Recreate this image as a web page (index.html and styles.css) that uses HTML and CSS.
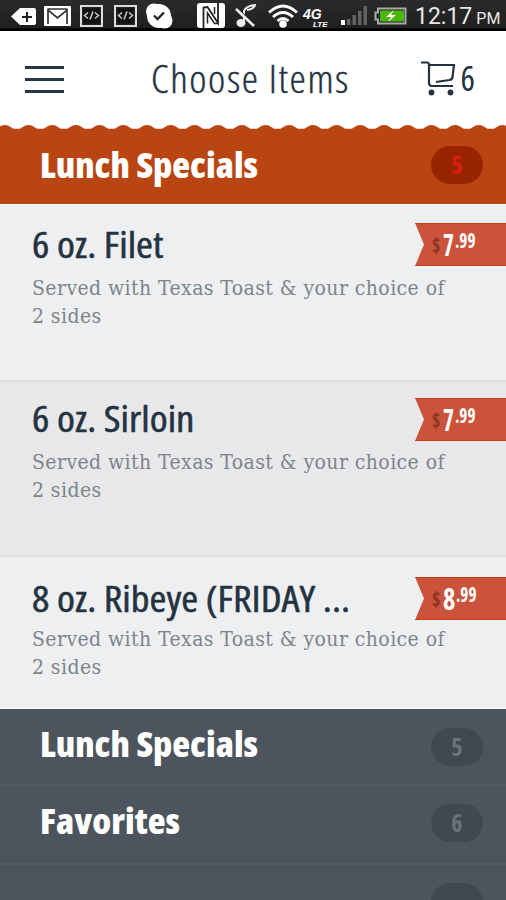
FILE: index.html
```
<!DOCTYPE html>
<html lang="en">
<head>
    <meta charset="UTF-8">
    <meta name="viewport" content="width=device-width, initial-scale=1.0">
    <title>Choose Items</title>
    <link rel="stylesheet" href="styles.css">
</head>
<body>
    <div class="status-bar">
        <svg class="s-back" width="25" height="18" viewBox="0 0 25 18"><path d="M9 1h14q2 0 2 2v13q0 2-2 2H9L0 9.500z" fill="#fff"/><path d="M16 5v10M11 10h10" stroke="#222" stroke-width="2"/></svg>
        <svg class="s-mail" width="27" height="20" viewBox="0 0 27 20"><rect width="27" height="20" rx="1" fill="#fff"/><path d="M4 18V4l9.500 8L23 4v14M4 3h19" fill="none" stroke="#333" stroke-width="1.700"/></svg>
        <svg class="s-code" width="23" height="22" viewBox="0 0 23 22"><rect x="1" y="1" width="21" height="20" fill="#222" stroke="#ddd" stroke-width="2"/><rect x="3.500" y="3.500" width="16" height="15" fill="#111"/><path d="M8 7.500l-3.500 3L8 13.500M15 7.500l3.500 3-3.500 3M13 6.500l-3 8" fill="none" stroke="#ccc" stroke-width="1.500"/></svg>
        <svg class="s-code2" width="23" height="22" viewBox="0 0 23 22"><rect x="1" y="1" width="21" height="20" fill="#222" stroke="#ddd" stroke-width="2"/><rect x="3.500" y="3.500" width="16" height="15" fill="#111"/><path d="M8 7.500l-3.500 3L8 13.500M15 7.500l3.500 3-3.500 3M13 6.500l-3 8" fill="none" stroke="#ccc" stroke-width="1.500"/></svg>
        <svg class="s-check" width="28" height="26" viewBox="0 0 28 26"><circle cx="14" cy="13" r="12" fill="#fff"/><circle cx="9" cy="8.500" r="8" fill="#fff"/><circle cx="19.500" cy="17.500" r="8" fill="#fff"/><path d="M9 12.500l3.500 3.500 6.500-6.500" fill="none" stroke="#222" stroke-width="2.300"/></svg>
        <svg class="s-nfc" width="28" height="25" viewBox="0 0 28 25"><rect width="28" height="25" rx="3" fill="#fff"/><path d="M6.500 25V4.500l4-.5 10.500 16V0" fill="none" stroke="#222" stroke-width="1.800"/><path d="M10.500 20.500V10l7 10.500h3.500M17.500 11V4" fill="none" stroke="#222" stroke-width="1.500"/></svg>
        <svg class="s-mute" width="22" height="24" viewBox="0 0 22 24"><path d="M9 18V7q2-5 11-6-1 4-8 5" fill="none" stroke="#eee" stroke-width="2"/><ellipse cx="6" cy="19" rx="4.500" ry="4" fill="#eee"/><path d="M3 6l17 16" stroke="#222" stroke-width="3"/><path d="M1 5l18 17" stroke="#eee" stroke-width="2.600"/></svg>
        <svg class="s-wifi" width="30" height="24" viewBox="0 0 30 24"><g fill="none" stroke="#fff" stroke-width="2.800"><path d="M1 8.500q14-13 28 0M5 13q10-9 20 0M9.500 17q5.500-5 11 0"/></g><circle cx="15" cy="20" r="3.800" fill="#fff"/></svg>
        <div class="s-lte"><b>4G</b><em>LTE</em></div>
        <svg class="s-signal" width="27" height="19" viewBox="0 0 27 19"><rect y="14" width="4" height="5" fill="#fff"/><path d="M6 13h3.500v6H6zM11.500 9H15v10h-3.500zM17 5h3.500v14H17zM22.500 0H26v19h-3.500z" fill="#636363"/></svg>
        <svg class="s-battery" width="33" height="18" viewBox="0 0 33 18"><path d="M4 1.500h27.500v15H4v-4H1.500v-7H4z" fill="#222" stroke="#aaa" stroke-width="2"/><rect x="6" y="3.500" width="24" height="11" fill="#4ab80b"/><path d="M20 3l-8 7h5l-3 5 8-7h-5z" fill="#fff"/></svg>
        <span class="clock">12:17<small>PM</small></span>
    </div>

    <header class="header">
        <div class="menu-button"><span></span><span></span><span></span></div>
        <h1 class="title">Choose Items</h1>
        <div class="cart">
            <svg width="36" height="36" viewBox="0 0 36 36" fill="none" stroke="#24333f" stroke-width="2.200"><path d="M1 2.500h6q2 0 2 2.500v18q0 3 3 3h21M9 5h25l-1.500 12q-.3 2.500-3 3L16 22"/><g fill="#24333f" stroke="none"><circle cx="11.500" cy="32.500" r="2.900"/><circle cx="30.500" cy="32.500" r="2.900"/></g></svg>
            <span class="cart-count">6</span>
        </div>
    </header>

    <svg class="wave" width="506" height="5">
        <defs>
            <pattern id="scallop" x="-7" width="23.700" height="5" patternUnits="userSpaceOnUse">
                <path d="M0 5V3.800H2C5 3.800 7 0 11.850 0S18.700 3.800 21.700 3.800H23.700V5z" fill="#b94513"/>
            </pattern>
        </defs>
        <rect width="506" height="5" fill="url(#scallop)"/>
    </svg>
    <div class="category active">
        <span class="category-name">Lunch Specials</span>
        <span class="count"><b>5</b></span>
    </div>

    <div class="item item-first">
        <div class="item-text">
            <h2>6 oz. Filet</h2>
            <p>Served with Texas Toast &amp; your choice of<br>2 sides</p>
        </div>
        <div class="price"><i>$</i><b>7</b><sup>.99</sup></div>
    </div>
    <div class="item item-second">
        <div class="item-text">
            <h2>6 oz. Sirloin</h2>
            <p>Served with Texas Toast &amp; your choice of<br>2 sides</p>
        </div>
        <div class="price"><i>$</i><b>7</b><sup>.99</sup></div>
    </div>
    <div class="item item-third">
        <div class="item-text">
            <h2>8 oz. Ribeye (FRIDAY ...</h2>
            <p>Served with Texas Toast &amp; your choice of<br>2 sides</p>
        </div>
        <div class="price"><i>$</i><b class="wide">8</b><sup>.99</sup></div>
    </div>

    <div class="category first">
        <span class="category-name">Lunch Specials</span>
        <span class="count"><b>5</b></span>
    </div>
    <div class="category">
        <span class="category-name">Favorites</span>
        <span class="count"><b>6</b></span>
    </div>
    <div class="category">
        <span class="category-name"></span>
        <span class="count"></span>
    </div>
</body>
</html>
```
FILE: styles.css
```
* { box-sizing: border-box; }
html { overflow: hidden; }
body { margin: 0; width: 506px; height: 900px; overflow: hidden; background: #fff; font-family: "Open Sans", sans-serif; font-stretch: 75%; color: #24333f; }
svg { flex: none; display: block; }

.status-bar { display: flex; align-items: center; height: 31px; padding-left: 11px; background: linear-gradient(#2b2b2b, #1f1f1f 90%, #000 93%); }
.s-mail { margin-left: 8px; }
.s-code { margin-left: 9px; }
.s-code2 { margin-left: 11px; }
.s-check { margin-left: 8px; }
.s-nfc { margin-left: 24px; }
.s-mute { margin-left: 10px; }
.s-wifi { margin-left: 11px; }
.s-lte { display: flex; flex-direction: column; width: 29px; margin: 6px 0 0 5px; font-family: "Liberation Sans", sans-serif; font-style: italic; font-weight: bold; color: #fff; }
.s-lte b { font-size: 14px; line-height: 12px; }
.s-lte em { padding-left: 10px; font-size: 8px; line-height: 9px; }
.s-signal { margin-left: 9px; }
.s-battery { margin-left: 6px; }
.clock { margin: 3px 0 0 8px; font: 23px/31px Roboto, sans-serif; color: #e8e8e8; white-space: nowrap; }
.clock small { margin-left: 4px; font-size: 16px; }

.header { display: flex; align-items: center; height: 94px; padding: 2px 31px 0 25px; }
.menu-button { display: flex; flex-direction: column; gap: 9px; width: 39px; }
.menu-button span { height: 3px; background: #24384a; }
.title { flex: 1; margin: -3px 0 0 87px; font-size: 39px; font-weight: 300; letter-spacing: 1.5px; white-space: nowrap; transform: scaleX(1.055); transform-origin: left; -webkit-text-stroke: 0.4px #24333f; }
.cart { display: flex; align-items: center; gap: 5px; }
.cart svg { margin-top: -2px; }
.cart-count { margin-top: -3px; font-size: 34px; }

.category { display: flex; align-items: flex-start; justify-content: space-between; height: 79px; padding: 18px 23px 0 40px; background: #4c555d; border-bottom: 2px solid #535d65; color: #fff; }
.category.first { height: 77px; padding-top: 19px; }
.category.active { height: 75px; padding-top: 16px; background: #b94513; border-bottom: 1px solid #fff; }
.category-name { margin-top: -7px; font-size: 35px; line-height: 48px; font-weight: 800; white-space: nowrap; transform: scaleX(1.05); transform-origin: left; }
.first .category-name { margin-top: -8px; }
.active .category-name { margin-top: -5px; }
.count { display: flex; align-items: center; justify-content: center; width: 52px; height: 38px; border-radius: 19px; background: #42494e; color: #69737b; font-size: 24px; line-height: 36px; }
.active .count { background: #982500; color: #dc1d0b; }

.item { display: flex; justify-content: space-between; align-items: flex-start; padding: 18px 0 0 32px; background: #eeeff1; border-bottom: 2px solid #dddee0; }
.item-first { height: 177px; }
.item-second { height: 175px; padding-top: 16px; background: #e8e8ea; }
.item-third { height: 152px; padding-top: 20px; border-bottom-color: #f8f8fa; }
.item-text { width: 380px; }
.item h2 { margin: 0; font-size: 36px; font-weight: 400; line-height: 44px; white-space: nowrap; transform: scaleX(1.135); transform-origin: left; -webkit-text-stroke: 0.5px #24333f; }
.item-second h2 { margin-top: -1px; }
.item p { margin: 7px 0 0; font: 21px/28px "DejaVu Serif Condensed", "DejaVu Serif", serif; font-stretch: 75%; letter-spacing: 0.42px; color: #7d848b; white-space: nowrap; }
.item-third p { margin-top: 4px; }
.price { display: flex; align-items: flex-start; width: 91px; height: 43px; padding-left: 17px; background: #cb533b; clip-path: polygon(0 0, 100% 0, 100% 100%, 0 100%, 9px 50%); color: #fff; border: solid #c43f17; border-width: 1px 0; }
.price i { width: 11px; font: 700 21px/42px "Open Sans", sans-serif; font-stretch: 75%; color: #8a3521; transform: scaleX(0.85); transform-origin: left; }
.price b { width: 12px; font-size: 31px; line-height: 40px; transform: scaleX(0.75); transform-origin: left; }
.price b.wide { width: 13px; transform: scaleX(0.85); }
.price sup { font-size: 22px; font-weight: 700; line-height: 31px; vertical-align: top; transform: scaleX(0.78); transform-origin: left; }
```
